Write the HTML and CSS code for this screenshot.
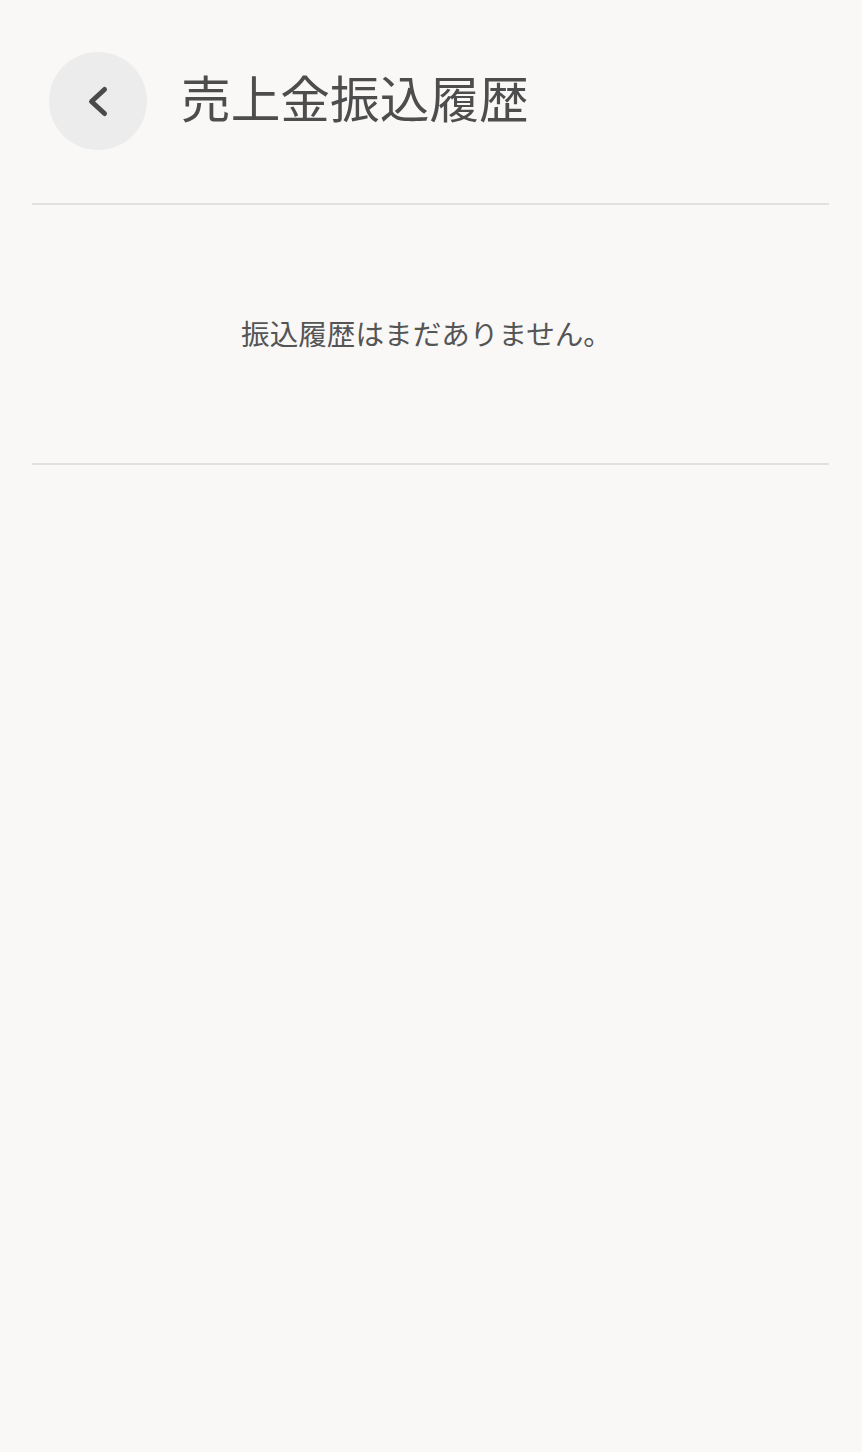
FILE: index.html
```html
<!DOCTYPE html>
<html lang="ja">
<head>
<meta charset="utf-8">
<link rel="stylesheet" href="styles.css">
</head>
<body>
<div class="page">
  <header class="header">
    <button class="back" aria-label="戻る">
      <svg width="40" height="40" viewBox="0 0 40 40">
        <path d="M26.5 8.5 L13.5 20.5 L26.5 32.5" fill="none" stroke="#4a4a4a" stroke-width="5" stroke-linecap="round" stroke-linejoin="round"/>
      </svg>
    </button>
    <h1 class="title">売上金振込履歴</h1>
  </header>
  <section class="list">
    <p class="empty">振込履歴はまだありません。</p>
  </section>
</div>
</body>
</html>
```
FILE: styles.css
```css
html, body {
  margin: 0;
  padding: 0;
  background: #f9f8f7;
  min-height: 100%;
}
body {
  font-family: "Noto Sans CJK JP", "Noto Sans", sans-serif;
  color: #4d4d4d;
}
.page {
  padding: 0 33px 0 32px;
}
.header {
  display: flex;
  align-items: center;
  gap: 34px;
  padding: 52px 0 53px 17px;
  border-bottom: 2px solid #e2e1e0;
}
.back {
  width: 98px;
  height: 98px;
  border-radius: 50%;
  border: none;
  background: #ececec;
  display: flex;
  align-items: center;
  justify-content: center;
  padding: 0;
  flex-shrink: 0;
}
.back svg {
  display: block;
}
.title {
  margin: 0 0 8px 0;
  font-size: 49.7px;
  font-weight: 400;
  line-height: 1;
  color: #4d4d4d;
}
.list {
  height: 258px;
  display: flex;
  align-items: center;
  justify-content: center;
  border-bottom: 2px solid #e2e1e0;
}
.empty {
  margin: 0 8px 2px 0;
  font-size: 28.6px;
  line-height: 1;
  color: #555;
}
```
